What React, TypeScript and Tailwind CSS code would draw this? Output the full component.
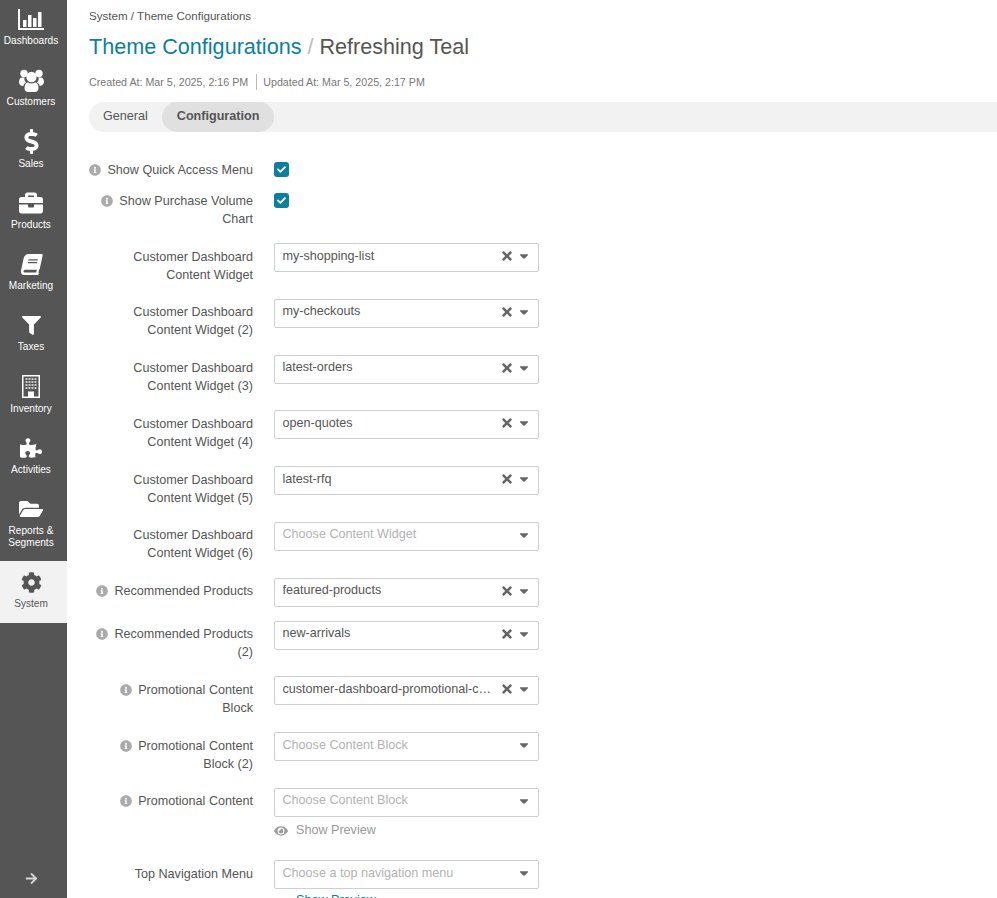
import type { ReactNode } from "react";
import {
  FaArrowRight,
  FaBook,
  FaBriefcase,
  FaCaretDown,
  FaCheck,
  FaCog,
  FaDollarSign,
  FaEye,
  FaFilter,
  FaFolderOpen,
  FaInfoCircle,
  FaPuzzlePiece,
  FaTimes,
} from "react-icons/fa";

function BarChartIcon() {
  return (
    <svg width="26" height="21" viewBox="0 0 26 21" fill="currentColor">
      <rect x="0" y="0" width="2" height="21" />
      <rect x="0" y="19" width="26" height="2" />
      <rect x="5" y="11" width="3.5" height="7" />
      <rect x="10" y="6" width="3.5" height="12" />
      <rect x="15" y="9" width="3.5" height="9" />
      <rect x="20" y="3" width="3.5" height="15" />
    </svg>
  );
}

function UsersIcon() {
  return (
    <svg width="25" height="23" viewBox="0 0 25 23" fill="currentColor">
      <circle cx="5" cy="4.5" r="3.7" />
      <circle cx="20" cy="4.5" r="3.7" />
      <path d="M0 13c0-3 1.5-4.5 3-4.5h2.5c-.5 1.5 0 3.5 1.5 5-1.6.8-2.5 2-2.7 3.5C1.5 17 0 15.5 0 13z" />
      <path d="M25 13c0-3-1.5-4.5-3-4.5h-2.5c.5 1.5 0 3.5-1.5 5 1.6.8 2.5 2 2.7 3.5 2.8-.5 4.3-2 4.3-4.5z" />
      <circle cx="12.5" cy="8" r="5.2" />
      <path d="M5.5 19c0-3.5 1.5-5.5 3.5-5.5 2 1.3 5 1.3 7 0 2 0 3.5 2 3.5 5.5 0 2.5-1.5 4-3.5 4H9c-2 0-3.5-1.5-3.5-4z" />
    </svg>
  );
}

function BuildingIcon() {
  const cells = [];
  for (let row = 0; row < 4; row++) {
    for (let col = 0; col < 4; col++) {
      cells.push(<rect key={`${row}-${col}`} x={3.5 + col * 3} y={3 + row * 3} width="2" height="2" fill="#c9c9c9" />);
    }
  }
  return (
    <svg width="18" height="23" viewBox="0 0 18 23">
      <rect x="0.75" y="0.75" width="16.5" height="21.5" fill="#555555" stroke="#ffffff" strokeWidth="1.5" />
      {cells}
      <rect x="6" y="16.5" width="6" height="5.5" fill="#ffffff" />
    </svg>
  );
}

const navItems: { label: ReactNode; icon: ReactNode; active?: boolean }[] = [
  { label: "Dashboards", icon: <BarChartIcon /> },
  { label: "Customers", icon: <UsersIcon /> },
  { label: "Sales", icon: <FaDollarSign size={25} /> },
  { label: "Products", icon: <FaBriefcase size={24} /> },
  { label: "Marketing", icon: <FaBook size={21} className="-skew-x-12" /> },
  { label: "Taxes", icon: <FaFilter size={19} /> },
  { label: "Inventory", icon: <BuildingIcon /> },
  { label: "Activities", icon: <FaPuzzlePiece size={22} /> },
  {
    label: (
      <>
        Reports &amp;
        <br />
        Segments
      </>
    ),
    icon: <FaFolderOpen size={24} />,
  },
  { label: "System", icon: <FaCog size={21} />, active: true },
];

function Sidebar() {
  return (
    <aside className="relative flex h-full w-[67px] shrink-0 flex-col bg-[#555555]">
      <div className="-mt-[2px]">
        {navItems.map((item, i) => (
          <div
            key={i}
            className={`flex min-h-[61.25px] flex-col items-center pt-[8px] pr-[5px] pb-[12.25px] text-center text-[10.1px] leading-[12px] ${
              item.active ? "bg-[#f2f2f2] text-[#555555]" : "text-white"
            }`}
          >
            <div className="flex h-[26px] items-center justify-center">{item.icon}</div>
            <div className="mt-[3px]">{item.label}</div>
          </div>
        ))}
      </div>
      <FaArrowRight size={13} className="absolute bottom-[13px] left-[25px] text-[#d5d5d5]" />
    </aside>
  );
}

function Label({ text, info }: { text: string; info?: boolean }) {
  return (
    <div className="w-[164px] shrink-0 pt-[0.5px] text-right text-[12.6px] leading-[18px] text-[#555555]">
      {info && (
        <FaInfoCircle size={12} className="mr-[6px] inline-block align-[-2px] text-[#aaaaaa]" />
      )}
      {text}
    </div>
  );
}

function CheckRow({ text, last }: { text: string; last?: boolean }) {
  return (
    <div className={`flex gap-[21px] ${last ? "mb-[15.5px]" : "mb-[12.5px]"}`}>
      <Label text={text} info />
      <div className="mt-[2px] flex h-[15px] w-[15px] items-center justify-center rounded-[3px] bg-[#0b7f9c] text-white">
        <FaCheck size={9} />
      </div>
    </div>
  );
}

function SelectRow({
  text,
  value,
  placeholder,
  info,
  after,
}: {
  text: string;
  value?: string;
  placeholder?: string;
  info?: boolean;
  after?: ReactNode;
}) {
  return (
    <div className="mb-[14px] flex gap-[21px]">
      <div className="pt-[4px] pb-[1.25px]">
        <Label text={text} info={info} />
      </div>
      <div className="w-[265px] shrink-0">
        <div className="flex h-[29px] items-center rounded-[2px] border border-[#cfcfcf] bg-white pr-[7px] pl-[7.5px] text-[12.6px]">
          <span
            className={`min-w-0 flex-1 truncate pb-[4px] leading-[18px] ${
              value ? "text-[#555555]" : "text-[#b3b3b3]"
            }`}
          >
            {value ?? placeholder}
          </span>
          {value && <FaTimes size={14} className="-mt-[3px] ml-[8px] shrink-0 text-[#666666]" />}
          <FaCaretDown size={14} className="-mt-[3px] ml-[3px] shrink-0 text-[#666666]" />
        </div>
        {after}
      </div>
    </div>
  );
}

function Preview({ teal }: { teal?: boolean }) {
  return (
    <div
      className={`flex h-[29.25px] items-center gap-[8px] text-[12.6px] ${
        teal ? "pb-[6px] text-[#0b7f9c]" : "pb-[1px] text-[#999999]"
      }`}
    >
      <FaEye size={14} className={teal ? "translate-y-[4px]" : ""} />
      Show Preview
    </div>
  );
}

export default function App() {
  return (
    <div className="flex h-screen overflow-hidden bg-white font-['Liberation_Sans',Arial,sans-serif]">
      <Sidebar />
      <main className="min-w-0 flex-1 pt-[8px] pl-[22px]">
        <div className="text-[11.6px] leading-[16px] text-[#555555]">System / Theme Configurations</div>
        <h1 className="mt-[9px] text-[21.6px] leading-[28px] text-[#555555]">
          <span className="text-[#0b7f9c]">Theme Configurations</span>
          <span className="text-[#bbbbbb]"> / </span>
          Refreshing Teal
        </h1>
        <div className="mt-[13px] flex items-center text-[10.7px] leading-[16px] text-[#777777]">
          <span className="border-r border-[#bbbbbb] pr-[8px]">Created At: Mar 5, 2025, 2:16 PM</span>
          <span className="pl-[6px]">Updated At: Mar 5, 2025, 2:17 PM</span>
        </div>
        <div className="mt-[12px] flex h-[30px] items-stretch rounded-l-[15px] bg-[#f2f2f2] text-[12.6px] text-[#555555]">
          <div className="flex items-center px-[14px] pb-[2px]">General</div>
          <div className="flex items-center rounded-[15px] bg-[#e0e0e0] px-[15px] pb-[2px] font-bold">Configuration</div>
        </div>
        <div className="mt-[28px]">
          <CheckRow text="Show Quick Access Menu" />
          <CheckRow text="Show Purchase Volume Chart" last />
          <SelectRow text="Customer Dashboard Content Widget" value="my-shopping-list" />
          <SelectRow text="Customer Dashboard Content Widget (2)" value="my-checkouts" />
          <SelectRow text="Customer Dashboard Content Widget (3)" value="latest-orders" />
          <SelectRow text="Customer Dashboard Content Widget (4)" value="open-quotes" />
          <SelectRow text="Customer Dashboard Content Widget (5)" value="latest-rfq" />
          <SelectRow text="Customer Dashboard Content Widget (6)" placeholder="Choose Content Widget" />
          <SelectRow text="Recommended Products" value="featured-products" info />
          <SelectRow text="Recommended Products (2)" value="new-arrivals" info />
          <SelectRow text="Promotional Content Block" value="customer-dashboard-promotional-content" info />
          <SelectRow text="Promotional Content Block (2)" placeholder="Choose Content Block" info />
          <SelectRow text="Promotional Content" placeholder="Choose Content Block" info after={<Preview />} />
          <SelectRow text="Top Navigation Menu" placeholder="Choose a top navigation menu" after={<Preview teal />} />
        </div>
      </main>
    </div>
  );
}
